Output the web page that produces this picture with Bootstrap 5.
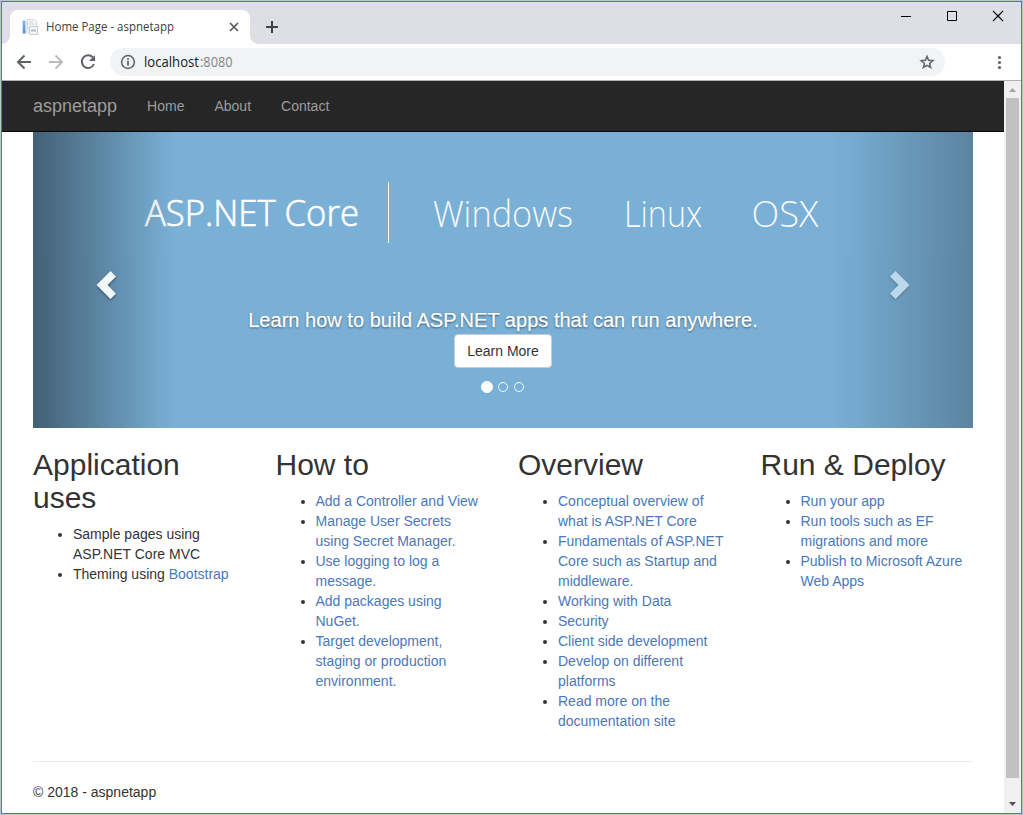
<!DOCTYPE html>
<html lang="en">
<head>
<meta charset="utf-8">
<meta name="viewport" content="width=device-width, initial-scale=1">
<title>Home Page - aspnetapp</title>
<link rel="stylesheet" href="https://cdn.jsdelivr.net/npm/bootstrap@5.3.0/dist/css/bootstrap.min.css">
<style>
  body { height: 815px; overflow: hidden; background: #c3c3c3; padding: 1px; font: 14px/20px "Liberation Sans", Arial, sans-serif; color: #333; }
  svg { display: block; flex: none; }
  .window { height: 813px; border: 1px solid #5079ae; background: #fff; }
  .tabstrip { height: 42px; background: #dedfe4; padding-left: 8px; }
  .tab { width: 240px; height: 34px; margin-top: 8px; background: #fff; border-radius: 8px 8px 0 0; padding: 0 10px 0 12px; font: 12px/16px "Open Sans", sans-serif; color: #3c4043; }
  .tab::before, .tab::after { content: ""; position: absolute; bottom: 0; width: 8px; height: 8px; }
  .tab::before { left: -8px; background: radial-gradient(circle at 0 0, transparent 7.5px, #fff 8px); }
  .tab::after { right: -8px; background: radial-gradient(circle at 100% 0, transparent 7.5px, #fff 8px); }
  .tab-title { margin-left: 8px; overflow: visible; }
  .new-tab { margin: 18px 0 0 15px; }
  .win-buttons { margin-top: 8px; padding-right: 17px; gap: 34px; }
  .toolbar { height: 37px; border-bottom: 1px solid #b1b1b1; padding: 0 14px; }
  .toolbar > svg + svg { margin-left: 16px; }
  .address { width: 835px; height: 28px; border-radius: 14px; background: #f1f3f4; margin-left: 14px; padding: 0 10px; font: 14px/20px "Open Sans", sans-serif; color: #202124; }
  .address svg + svg:not(.ms-auto) { margin-left: 8px; }
  .site-nav { height: 51px; background: #262626; border-bottom: 1px solid #080808; padding: 0 0 0 31px; }
  .site-nav .navbar-brand { font-size: 18px; line-height: 20px; color: #9d9d9d; padding: 0; margin: 0 15px 0 0; }
  .site-nav .navbar-nav .nav-link { color: #9d9d9d; padding: 0 15px; line-height: 20px; }
  .page { padding: 0 31px; }
  .hero { height: 296px; background: #7ab0d6; }
  .hero .slide-art { position: absolute; left: 0; top: 0; }
  .hero .carousel-caption { left: 20%; right: 20%; bottom: 20px; padding: 20px 0 40px; color: #fff; }
  .hero .carousel-caption p { font-size: 20px; line-height: 28px; margin: 0 -2px; letter-spacing: .02px; white-space: nowrap; text-shadow: 0 1px 2px rgba(0,0,0,.6); -webkit-text-stroke: .25px #fff; }
  .btn-learn { --bs-btn-font-size: 14px; --bs-btn-line-height: 20px; --bs-btn-padding-y: 6px; --bs-btn-padding-x: 12px; --bs-btn-border-radius: 4px; --bs-btn-color: #333; --bs-btn-bg: #fff; --bs-btn-border-color: #ccc; }
  .hero .arrow { width: 15%; transition: none; }
  .hero .carousel-control-prev { opacity: .9; background: linear-gradient(to right, rgba(0,0,0,.5), rgba(0,0,0,0)); }
  .hero .carousel-control-next { opacity: .5; background: linear-gradient(to right, rgba(0,0,0,0), rgba(0,0,0,.5)); }
  .arrow svg { filter: drop-shadow(0 1px 1.5px rgba(0,0,0,.5)); margin: 10px 0 0 5px; }
  .carousel-control-next.arrow svg { margin: 10px 6px 0 0; }
  .hero .dots { bottom: 35px; gap: 6px; }
  .dot { width: 10px; height: 10px; border: 1px solid #fff; border-radius: 50%; }
  .dot.active { width: 12px; height: 12px; margin: 0 -1px; background: #fff; }
  .links { --bs-gutter-x: 30px; height: 333px; }
  .links h2 { font-size: 30px; line-height: 33px; font-weight: 400; margin: 20px 0 10px; }
  .links ul { padding-left: 40px; margin: 0; }
  .page a:not(.btn) { color: #4a78ba; text-decoration: none; }
  .page footer { border-top: 1px solid #ebebeb; padding-top: 20px; }
  .scroll { width: 17px; background: #f0f0f0; }
  .thumb { width: 13px; height: 680px; background: #c1c1c1; }
</style>
</head>
<body>
<div class="window d-flex flex-column">
  <div class="tabstrip d-flex">
    <div class="tab position-relative d-flex align-items-center">
      <svg width="16" height="16" viewBox="0 0 16 16"><defs><linearGradient id="spine" x2="0" y2="1"><stop stop-color="#8db9e2"/><stop offset="1" stop-color="#4f8dcb"/></linearGradient></defs><rect x="1" y="1.500" width="2.500" height="13" fill="url(#spine)"/><path d="M0 1.500h1v13H0z" fill="#cddff0"/><path d="M4 1.500h3v13H4z" fill="#e3eaf1"/><path d="M5.500.5h7l2 2v7h-9z" fill="#f3f5f6" stroke="#d3d8dc"/><path d="M7.500 7.500h8v8h-8z" fill="#f4f5f6" stroke="#c9ced3"/><path d="M7 3h4M7 5h5" stroke="#d0d6db"/><path d="M9 11.500h5" stroke="#b0bcc7" stroke-width="2"/></svg>
      <svg class="tab-title" width="150" height="24"><text x="0" y="16" textLength="128" lengthAdjust="spacingAndGlyphs" fill="#3c4043">Home Page - aspnetapp</text></svg>
      <svg class="ms-auto" width="12" height="12" viewBox="0 0 12 12"><path d="m2 2 8 8m0-8-8 8" stroke="#55595d" stroke-width="1.700"/></svg>
    </div>
    <svg class="new-tab" width="14" height="14" viewBox="0 0 14 14"><path d="M7 1v12M1 7h12" stroke="#3f4246" stroke-width="2"/></svg>
    <div class="win-buttons ms-auto d-flex">
      <svg width="12" height="12"><path d="M1 6.500h10" stroke="#000"/></svg>
      <svg width="12" height="12"><path d="M1.500 1.500h9v9h-9z" fill="none" stroke="#000"/></svg>
      <svg width="12" height="12"><path d="m1 1 10 10M11 1 1 11" stroke="#000" stroke-width="1.100"/></svg>
    </div>
  </div>
  <div class="toolbar d-flex align-items-center">
    <svg width="16" height="16" viewBox="0 0 16 16" fill="none" stroke="#5f6368" stroke-width="2"><path d="M15 8H2.500M8.500 1.500 2 8l6.500 6.500"/></svg>
    <svg width="16" height="16" viewBox="0 0 16 16" fill="none" stroke="#babcbe" stroke-width="2"><path d="M1 8h12.500M7.500 1.500 14 8l-6.500 6.500"/></svg>
    <svg width="16" height="16" viewBox="0 0 16 16"><path d="M12.800 3.400A6.300 6.300 0 1 0 14 10" fill="none" stroke="#5f6368" stroke-width="2"/><path d="M15 1v6H9z" fill="#5f6368"/></svg>
    <div class="address d-flex align-items-center">
      <svg width="16" height="16" viewBox="0 0 16 16"><circle cx="8" cy="8" r="6.400" fill="none" stroke="#5f6368" stroke-width="1.500"/><path d="M8 7v4.500M8 4.200v1.700" stroke="#5f6368" stroke-width="1.800"/></svg>
      <svg width="94" height="24"><text x="0" y="17" textLength="55" lengthAdjust="spacingAndGlyphs" fill="#202124">localhost</text><text x="56" y="17" textLength="32.500" lengthAdjust="spacingAndGlyphs" fill="#80868b">:8080</text></svg>
      <svg class="ms-auto" width="16" height="16" viewBox="0 0 16 16"><path d="m8 2.400 1.600 3.900 4.200.35-3.200 2.750 1 4.100L8 11.300l-3.600 2.200 1-4.100-3.200-2.750 4.200-.35z" fill="none" stroke="#5f6368" stroke-width="1.500"/></svg>
    </div>
    <svg class="ms-auto" width="15" height="16" viewBox="0 0 15 16" fill="#5f6368"><circle cx="7.500" cy="3.500" r="1.600"/><circle cx="7.500" cy="8.500" r="1.600"/><circle cx="7.500" cy="13.500" r="1.600"/></svg>
  </div>
  <div class="d-flex flex-grow-1">
    <div class="flex-grow-1">
      <nav class="site-nav navbar navbar-expand flex-nowrap justify-content-start">
        <a class="navbar-brand" href="#">aspnetapp</a>
        <div class="navbar-nav"><a class="nav-link" href="#">Home</a><a class="nav-link" href="#">About</a><a class="nav-link" href="#">Contact</a></div>
      </nav>
      <main class="page">
        <div class="hero carousel position-relative">
          <svg class="slide-art" width="940" height="140" fill="#fff" font-family="Open Sans, Noto Sans, sans-serif">
            <text x="112" y="94" font-size="36" font-weight="300" stroke="#fff" stroke-width=".7" textLength="214" lengthAdjust="spacingAndGlyphs">ASP.NET Core</text>
            <path d="M355.500 50v61" stroke="#fff"/>
            <g font-size="37" font-weight="300" stroke="#7ab0d6" stroke-width=".15">
              <text x="400" y="95" textLength="140" lengthAdjust="spacingAndGlyphs">Windows</text>
              <text x="591" y="95" textLength="78" lengthAdjust="spacingAndGlyphs">Linux</text>
              <text x="718.500" y="95" textLength="67" lengthAdjust="spacingAndGlyphs">OSX</text>
            </g>
          </svg>
          <div class="carousel-caption"><p>Learn how to build ASP.NET apps that can run anywhere.</p><a class="btn btn-learn" href="#">Learn More</a></div>
          <div class="dots carousel-indicators m-0 align-items-center"><span class="dot active"></span><span class="dot"></span><span class="dot"></span></div>
          <a class="arrow carousel-control-prev" href="#" aria-label="Previous"><svg width="20" height="28" viewBox="0 0 20 28"><path d="M14.500 0 20 5.500 11.500 14l8.500 8.500-5.500 5.500L.5 14z" fill="#fff"/></svg></a>
          <a class="arrow carousel-control-next" href="#" aria-label="Next"><svg width="20" height="28" viewBox="0 0 20 28"><path d="M5.500 0 0 5.500 8.500 14 0 22.500 5.500 28l14-14z" fill="#fff"/></svg></a>
        </div>
        <div class="links row">
          <div class="col-3"><h2>Application uses</h2><ul><li>Sample pages using ASP.NET Core MVC</li><li>Theming using <a href="#">Bootstrap</a></li></ul></div>
          <div class="col-3"><h2>How to</h2><ul><li><a href="#">Add a Controller and View</a></li><li><a href="#">Manage User Secrets using Secret Manager.</a></li><li><a href="#">Use logging to log a message.</a></li><li><a href="#">Add packages using NuGet.</a></li><li><a href="#">Target development, staging or production environment.</a></li></ul></div>
          <div class="col-3"><h2>Overview</h2><ul><li><a href="#">Conceptual overview of what is ASP.NET Core</a></li><li><a href="#">Fundamentals of ASP.NET Core such as Startup and middleware.</a></li><li><a href="#">Working with Data</a></li><li><a href="#">Security</a></li><li><a href="#">Client side development</a></li><li><a href="#">Develop on different platforms</a></li><li><a href="#">Read more on the documentation site</a></li></ul></div>
          <div class="col-3"><h2>Run &amp; Deploy</h2><ul><li><a href="#">Run your app</a></li><li><a href="#">Run tools such as EF migrations and more</a></li><li><a href="#">Publish to Microsoft Azure Web Apps</a></li></ul></div>
        </div>
        <footer>© 2018 - aspnetapp</footer>
      </main>
    </div>
    <div class="scroll d-flex flex-column align-items-center justify-content-between">
      <svg width="17" height="17"><path d="M5 11h7L8.500 7z" fill="#a3a3a3"/></svg>
      <div class="thumb mb-auto"></div>
      <svg width="17" height="17"><path d="M5 6h7l-3.500 4z" fill="#505050"/></svg>
    </div>
  </div>
</div>
<script src="https://cdn.jsdelivr.net/npm/bootstrap@5.3.0/dist/js/bootstrap.bundle.min.js"></script>
</body>
</html>
